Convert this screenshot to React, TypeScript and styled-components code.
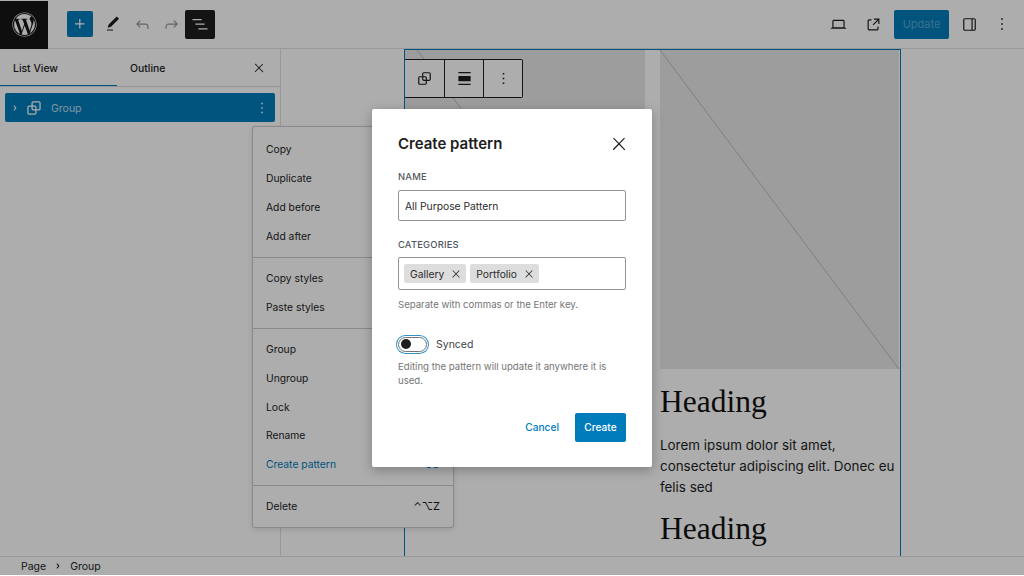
import React from 'react'
import styled, { createGlobalStyle } from 'styled-components'
import { FaWordpress } from 'react-icons/fa'

const GlobalStyle = createGlobalStyle`
  html, body { margin: 0; padding: 0; background: #fff; }
  body { font-family: Inter, "Liberation Sans", sans-serif; }
  * { box-sizing: border-box; }
`

const Editor = styled.div`
  position: relative;
  width: 1024px;
  height: 575px;
  overflow: hidden;
  display: grid;
  grid-template-rows: 49px 1fr 19px;
  background: #fff;
`

const TopBar = styled.header`
  display: flex;
  align-items: center;
  border-bottom: 1px solid #e0e0e0;
`

const LogoTile = styled.div`
  width: 48px;
  height: 48px;
  background: #151515;
  color: #fff;
  display: grid;
  place-items: center;
  margin-top: 1px;
`

const BarGroup = styled.div`
  display: flex;
  align-items: center;
`

const ToolsGroup = styled(BarGroup)`
  margin-left: 19px;
`

const SettingsGroup = styled(BarGroup)`
  margin-left: auto;
  padding-right: 5px;
`

const IconSlot = styled.div<{ $w?: number; $color?: string }>`
  width: ${p => p.$w ?? 29}px;
  height: 29px;
  display: grid;
  place-items: center;
  color: ${p => p.$color ?? '#1e1e1e'};
`

const AddButton = styled.div`
  width: 26px;
  height: 26px;
  border-radius: 2px;
  background: #007cba;
  color: #fff;
  display: grid;
  place-items: center;
  margin-right: 5px;
`

const HistoryGroup = styled(BarGroup)`
  margin-left: 1px;
`

const ListViewToggle = styled.div`
  width: 30px;
  height: 29px;
  margin-left: -1px;
  border-radius: 2px;
  background: #1e1e1e;
  color: #fff;
  display: grid;
  place-items: center;
`

const UpdateButton = styled.div`
  width: 55px;
  height: 29px;
  margin: 0 6px 0 3px;
  border-radius: 2px;
  background: #007cba;
  color: rgba(255, 255, 255, 0.35);
  font-size: 11px;
  display: grid;
  place-items: center;
`

const Body = styled.main`
  display: grid;
  grid-template-columns: 281px 1fr;
  min-height: 0;
`

const ListPanel = styled.aside`
  border-right: 1px solid #e0e0e0;
  background: #fff;
`

const PanelTabs = styled.div`
  height: 38px;
  display: grid;
  grid-template-columns: 117px 117px 1fr;
  align-items: stretch;
  border-bottom: 1px solid #ddd;
`

const PanelTab = styled.div<{ $active?: boolean }>`
  display: flex;
  align-items: center;
  padding: 1px 0 0 13px;
  font-size: 10.4px;
  font-weight: 500;
  color: #1e1e1e;
  box-shadow: ${p => (p.$active ? 'inset 0 -1px 0 #007cba' : 'none')};
`

const PanelClose = styled.div`
  display: flex;
  align-items: center;
  justify-content: flex-end;
  padding: 1px 14px 0 0;
  color: #1e1e1e;
`

const TreeRow = styled.div`
  margin: 6px 5px 0;
  height: 29px;
  border-radius: 2px;
  background: #007cba;
  color: #fff;
  display: flex;
  align-items: center;
  padding: 0 4px 0 2px;
  font-size: 10.5px;
`

const TreeIcon = styled.span`
  display: flex;
  margin-left: 1px;
`

const TreeLabel = styled.span`
  margin-left: 7px;
  padding-top: 2px;
  flex: 1;
  color: rgba(255, 255, 255, 0.75);
`

const Canvas = styled.section`
  padding-left: 123px;
  background: #fff;
  min-height: 0;
  overflow: hidden;
`

const GroupFrame = styled.div`
  width: 497px;
  height: 100%;
  overflow: hidden;
  border: 1px solid #007cba;
  border-bottom: 0;
  display: grid;
  grid-template-columns: 240px 239px;
  column-gap: 15px;
  align-items: start;
`

const Column = styled.div`
  min-width: 0;
`

const Placeholder = styled.svg`
  display: block;
  width: 100%;
  height: 319px;
  background: #e8e8e8;
`

const ArticleHeading = styled.h2<{ $gap: number }>`
  margin: ${p => p.$gap}px 0 0;
  font-family: "Liberation Serif", serif;
  font-weight: 400;
  font-size: 31.5px;
  line-height: 40px;
  color: #111;
`

const ArticleText = styled.p`
  margin: 13px 0 0;
  font-size: 13.4px;
  line-height: 21px;
  color: #1e1e1e;
`

const BlockToolbar = styled.div`
  position: absolute;
  left: 405px;
  top: 59px;
  height: 39px;
  display: flex;
  background: #fff;
  border: 1px solid #1e1e1e;
  border-left: 0;
  border-radius: 0 2px 2px 0;
  color: #1e1e1e;
`

const BlockToolbarCell = styled.div`
  width: 39px;
  display: grid;
  place-items: center;
  border-left: 1px solid #1e1e1e;

  &:first-child {
    border-left: 0;
  }
`

const StatusBar = styled.footer`
  display: flex;
  align-items: center;
  padding: 0 0 0 21px;
  border-top: 1px solid #e0e0e0;
  background: #fff;
  font-size: 10.5px;
  color: #1e1e1e;
`

const CrumbChevron = styled.span`
  display: grid;
  place-items: center;
  width: 24px;
`

const ContextMenu = styled.div`
  position: absolute;
  left: 253px;
  top: 127px;
  width: 200px;
  background: #fff;
  border-radius: 2px;
  box-shadow: 0 0 0 1px #ccc, 0 2px 6px rgba(0, 0, 0, 0.15);
`

const MenuGroup = styled.div`
  padding: 6px 0 6.4px;
  border-top: 1px solid #ccc;

  &:first-child {
    padding-top: 8px;
    border-top: 0;
  }
`

const MenuItem = styled.div<{ $accent?: boolean }>`
  height: 28.8px;
  padding: 0 13px;
  display: flex;
  align-items: center;
  justify-content: space-between;
  font-size: 10.3px;
  color: ${p => (p.$accent ? '#007cba' : '#1e1e1e')};
`

const Shortcut = styled.span`
  font-size: 11px;
`

const Scrim = styled.div`
  position: absolute;
  inset: 0;
  background: rgba(0, 0, 0, 0.32);
  display: flex;
  align-items: center;
  justify-content: center;
`

const Modal = styled.div`
  width: 280px;
  height: 358px;
  margin-top: 1px;
  background: #fff;
  border-radius: 2px;
  padding: 17px 26px 0;
  box-shadow: 0 3px 12px rgba(0, 0, 0, 0.28);
  color: #1e1e1e;
`

const ModalHeader = styled.div`
  height: 35px;
  display: flex;
  align-items: center;
  justify-content: space-between;
`

const ModalTitle = styled.h1`
  margin: 0;
  font-size: 15px;
  line-height: 35px;
  font-weight: 600;
  color: #1e1e1e;
`

const ModalClose = styled.div`
  display: grid;
  place-items: center;
  margin-right: -3px;
`

const FieldLabel = styled.label<{ $gap: number }>`
  display: block;
  margin-top: ${p => p.$gap}px;
  font-size: 9.4px;
  line-height: 12px;
  font-weight: 500;
  letter-spacing: 0.2px;
  text-transform: uppercase;
  color: #50575e;
`

const TextField = styled.div`
  height: 31px;
  margin-top: 7px;
  padding: 0 6px;
  display: flex;
  align-items: center;
  border: 1px solid #949494;
  border-radius: 2px;
  font-size: 10.3px;
  color: #2c2c2c;
`

const TokenField = styled(TextField)`
  height: 33px;
  margin-top: 6px;
  padding: 0 5px;
  gap: 4px;
`

const Token = styled.span`
  height: 19px;
  display: flex;
  align-items: center;
  gap: 6px;
  padding: 0 4px 0 6px;
  border-radius: 2px;
  background: #ddd;
  font-size: 10.3px;
`

const Help = styled.p<{ $gap: number }>`
  margin: ${p => p.$gap}px 0 0;
  font-size: 9.6px;
  line-height: 14.5px;
  color: #757575;
`

const ToggleRow = styled.div`
  display: flex;
  align-items: center;
  gap: 9px;
  margin-top: 24px;
  font-size: 10.5px;
  color: #3c434a;
`

const ToggleTrack = styled.div`
  width: 29px;
  height: 15px;
  padding-left: 2px;
  display: flex;
  align-items: center;
  border: 1px solid #757575;
  border-radius: 8px;
  background: #fff;
  box-shadow: 0 0 0 1px #fff, 0 0 0 2px #2f93c9;
`

const ToggleThumb = styled.span`
  width: 10px;
  height: 10px;
  border-radius: 50%;
  background: #1e1e1e;
`

const ModalActions = styled.div`
  display: flex;
  align-items: center;
  justify-content: flex-end;
  gap: 16px;
  margin-top: 24px;
  font-size: 10.2px;
`

const CancelLink = styled.span`
  color: #007cba;
  font-weight: 500;
`

const CreateButton = styled.div`
  width: 51px;
  height: 29px;
  border-radius: 2px;
  background: #007cba;
  color: #fff;
  font-weight: 500;
  display: grid;
  place-items: center;
`

const Icon = ({ d, size = 24 }: { d: string; size?: number }) => (
  <svg width={size} height={size} viewBox="0 0 24 24" fill="currentColor">
    <path d={d} fillRule="evenodd" />
  </svg>
)

const paths = {
  plus: 'M11 12.5V17.5H12.5V12.5H17.5V11H12.5V6H11V11H6V12.5H11Z',
  pen: 'M20.1 5.1L16.9 2 6.2 12.7l-1.3 4.4 4.5-1.3L20.1 5.1zM4 20.8h8v-1.5H4v1.5z',
  undo: 'M18.3 11.7c-.6-.6-1.4-.9-2.3-.9H6.7l2.9-3.3-1.1-1-4.5 5L8.5 16l1-1-2.7-2.7H16c.5 0 .9.2 1.3.5 1 1 1 3.4 1 4.5v.3h1.5v-.2c0-1.5 0-4.3-1.5-5.7z',
  redo: 'M15.6 6.5l-1.1 1 2.9 3.3H8c-.9 0-1.7.3-2.3.9-1.4 1.5-1.4 4.2-1.4 5.6v.2h1.5v-.3c0-1.1 0-3.5 1-4.5.3-.3.7-.5 1.3-.5h9.2L14.5 15l1.1 1.1 4.6-4.6-4.6-5z',
  listView: 'M3 6h11v1.5H3V6Zm3.5 5.5h11V13h-11v-1.5ZM21 17H10v1.5h11V17Z',
  close: 'M13 11.8l6.1-6.3-1-1-6.1 6.2-6.1-6.3-1 1 6.1 6.3-6.5 6.7 1 1 6.5-6.6 6.5 6.7 1-1z',
  more: 'M13 19h-2v-2h2v2zm0-6h-2v-2h2v2zm0-6h-2V5h2v2z',
  chevron: 'M10.8622 8.04053L14.2805 12.0286L10.8622 16.0167L9.72327 15.0405L12.3049 12.0286L9.72327 9.01672L10.8622 8.04053Z',
  group: 'M18 4h-7c-1.1 0-2 .9-2 2v3H6c-1.1 0-2 .9-2 2v7c0 1.1.9 2 2 2h7c1.1 0 2-.9 2-2v-3h3c1.1 0 2-.9 2-2V6c0-1.1-.9-2-2-2zm-4.5 14c0 .3-.2.5-.5.5H6c-.3 0-.5-.2-.5-.5v-7c0-.3.2-.5.5-.5h3V13c0 1.1.9 2 2 2h2.5v3zm0-4.5H11c-.3 0-.5-.2-.5-.5v-2.5H13c.3 0 .5.2.5.5v2.5zm5-.5c0 .3-.2.5-.5.5h-3V11c0-1.1-.9-2-2-2h-2.5V6c0-.3.2-.5.5-.5h7c.3 0 .5.2.5.5v7z',
  laptop: 'M20.5 16h-.7V8c0-1.1-.9-2-2-2H6.2c-1.1 0-2 .9-2 2v8h-.7c-.8 0-1.5.7-1.5 1.5h20c0-.8-.7-1.5-1.5-1.5zM5.7 8c0-.3.2-.5.5-.5h11.6c.3 0 .5.2.5.5v7.6H5.7V8z',
  external: 'M19.5 4.5h-7V6h4.44l-5.97 5.97 1.06 1.06L18 7.06v4.44h1.5v-7Zm-13 1a2 2 0 0 0-2 2v10a2 2 0 0 0 2 2h10a2 2 0 0 0 2-2v-3H17v3a.5.5 0 0 1-.5.5h-10a.5.5 0 0 1-.5-.5v-10a.5.5 0 0 1 .5-.5h3V5.5h-3Z',
  sidebar: 'M18 4H6c-1.1 0-2 .9-2 2v12c0 1.1.9 2 2 2h12c1.1 0 2-.9 2-2V6c0-1.1-.9-2-2-2zM5.5 18V6c0-.3.2-.5.5-.5h8.5v13H6c-.3 0-.5-.2-.5-.5zm10.5.5v-13h2c.3 0 .5.2.5.5v12c0 .3-.2.5-.5.5h-2z',
  alignFull: 'M5 4.5h14V6H5zM5 18h14v1.5H5zM5 9h14v6H5z',
}

const menuGroups = [
  [{ label: 'Copy' }, { label: 'Duplicate' }, { label: 'Add before' }, { label: 'Add after' }],
  [{ label: 'Copy styles' }, { label: 'Paste styles' }],
  [
    { label: 'Group' },
    { label: 'Ungroup' },
    { label: 'Lock' },
    { label: 'Rename' },
    { label: 'Create pattern', accent: true, shortcut: '\u2303\u2325O' },
  ],
  [{ label: 'Delete', shortcut: '\u2303\u2325Z' }],
]

const App = () => {
  return (
    <>
      <GlobalStyle />
      <Editor>
        <TopBar>
          <LogoTile>
            <FaWordpress size={25} />
          </LogoTile>
          <ToolsGroup>
            <AddButton>
              <Icon d={paths.plus} size={20} />
            </AddButton>
            <IconSlot>
              <Icon d={paths.pen} size={18} />
            </IconSlot>
            <HistoryGroup>
              <IconSlot $color="#949494">
                <Icon d={paths.undo} size={19} />
              </IconSlot>
              <IconSlot $color="#949494">
                <Icon d={paths.redo} size={19} />
              </IconSlot>
            </HistoryGroup>
            <ListViewToggle>
              <Icon d={paths.listView} size={20} />
            </ListViewToggle>
          </ToolsGroup>
          <SettingsGroup>
            <IconSlot $w={35}>
              <Icon d={paths.laptop} size={19} />
            </IconSlot>
            <IconSlot $w={35}>
              <Icon d={paths.external} size={19} />
            </IconSlot>
            <UpdateButton>Update</UpdateButton>
            <IconSlot>
              <Icon d={paths.sidebar} size={19} />
            </IconSlot>
            <IconSlot $w={35}>
              <Icon d={paths.more} size={20} />
            </IconSlot>
          </SettingsGroup>
        </TopBar>

        <Body>
          <ListPanel>
            <PanelTabs>
              <PanelTab $active>List View</PanelTab>
              <PanelTab>Outline</PanelTab>
              <PanelClose>
                <Icon d={paths.close} size={14} />
              </PanelClose>
            </PanelTabs>
            <TreeRow>
              <Icon d={paths.chevron} size={16} />
              <TreeIcon>
                <Icon d={paths.group} size={20} />
              </TreeIcon>
              <TreeLabel>Group</TreeLabel>
              <Icon d={paths.more} size={18} />
            </TreeRow>
          </ListPanel>
          <Canvas>
            <GroupFrame>
              <Column>
                <Placeholder viewBox="0 0 240 319" preserveAspectRatio="none">
                  <line x1="12" y1="0" x2="240" y2="304" stroke="#bbb" strokeWidth="1" />
                </Placeholder>
              </Column>
              <Column>
                <Placeholder viewBox="0 0 239 319" preserveAspectRatio="none">
                  <line x1="0" y1="0" x2="239" y2="319" stroke="#bbb" strokeWidth="1" />
                </Placeholder>
                <ArticleHeading $gap={13}>Heading</ArticleHeading>
                <ArticleText>Lorem ipsum dolor sit amet, consectetur adipiscing elit. Donec eu felis sed</ArticleText>
                <ArticleHeading $gap={11}>Heading</ArticleHeading>
              </Column>
            </GroupFrame>
          </Canvas>
        </Body>

        <StatusBar>
          <span>Page</span>
          <CrumbChevron>
            <Icon d={paths.chevron} size={16} />
          </CrumbChevron>
          <span>Group</span>
        </StatusBar>

        <BlockToolbar>
          <BlockToolbarCell>
            <Icon d={paths.group} size={19} />
          </BlockToolbarCell>
          <BlockToolbarCell>
            <Icon d={paths.alignFull} size={21} />
          </BlockToolbarCell>
          <BlockToolbarCell>
            <Icon d={paths.more} size={19} />
          </BlockToolbarCell>
        </BlockToolbar>

        <ContextMenu>
          {menuGroups.map((group, i) => (
            <MenuGroup key={i}>
              {group.map(item => (
                <MenuItem key={item.label} $accent={item.accent}>
                  {item.label}
                  {item.shortcut ? <Shortcut>{item.shortcut}</Shortcut> : null}
                </MenuItem>
              ))}
            </MenuGroup>
          ))}
        </ContextMenu>

        <Scrim>
          <Modal>
            <ModalHeader>
              <ModalTitle>Create pattern</ModalTitle>
              <ModalClose>
                <Icon d={paths.close} size={20} />
              </ModalClose>
            </ModalHeader>
            <FieldLabel $gap={10}>Name</FieldLabel>
            <TextField>All Purpose Pattern</TextField>
            <FieldLabel $gap={18}>Categories</FieldLabel>
            <TokenField>
              <Token>
                Gallery
                <Icon d={paths.close} size={12} />
              </Token>
              <Token>
                Portfolio
                <Icon d={paths.close} size={12} />
              </Token>
            </TokenField>
            <Help $gap={8}>Separate with commas or the Enter key.</Help>
            <ToggleRow>
              <ToggleTrack>
                <ToggleThumb />
              </ToggleTrack>
              Synced
            </ToggleRow>
            <Help $gap={8}>Editing the pattern will update it anywhere it is used.</Help>
            <ModalActions>
              <CancelLink>Cancel</CancelLink>
              <CreateButton>Create</CreateButton>
            </ModalActions>
          </Modal>
        </Scrim>
      </Editor>
    </>
  )
}

export default App
